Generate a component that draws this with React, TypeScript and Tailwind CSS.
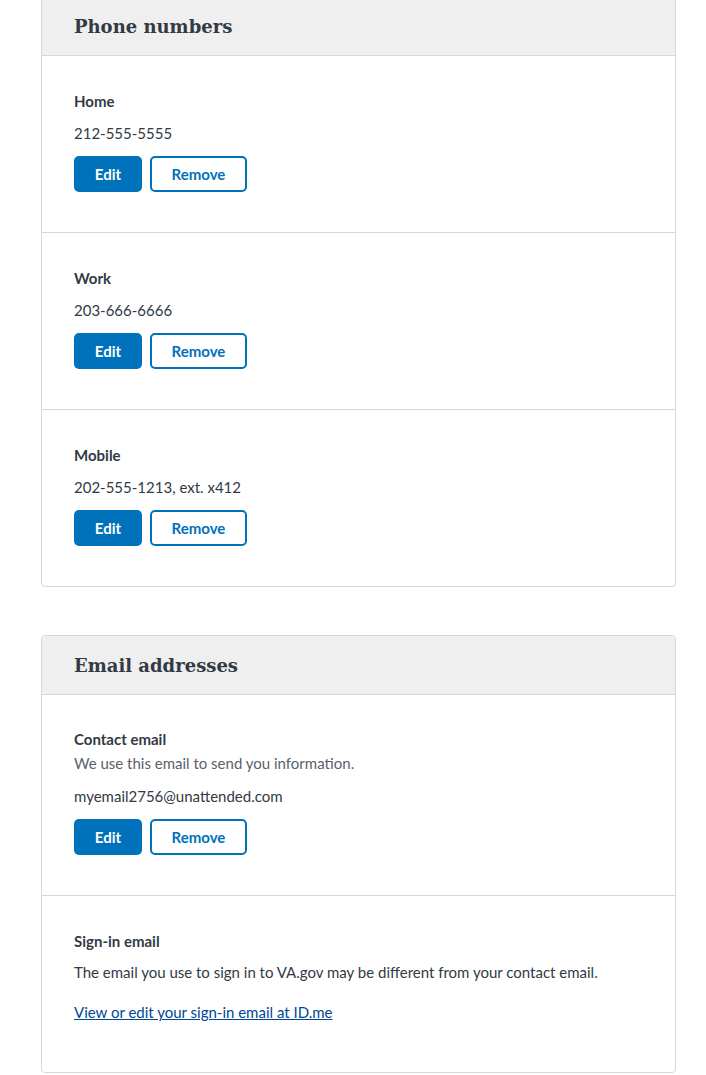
import React from "react";

const sans = "font-['Lato','Liberation_Sans',sans-serif]";
const serif = "font-['DejaVu_Serif','Liberation_Serif',serif]";

function Buttons() {
  return (
    <div className="mt-3 flex gap-2">
      <button className={`h-9 w-[68px] rounded-[5px] bg-[#0071bb] text-[15px] font-bold text-white ${sans}`}>Edit</button>
      <button className={`h-9 w-[97px] rounded-[5px] border-2 border-[#0071bb] bg-white text-[15px] font-bold text-[#0071bb] ${sans}`}>Remove</button>
    </div>
  );
}

function PhoneRow({ label, value, last }: { label: string; value: string; last?: boolean }) {
  return (
    <div className={`px-8 pt-[34px] pb-10 ${last ? "" : "border-b border-[#d6d7d9]"}`}>
      <div className="text-[15px] font-bold leading-[22px] text-[#323a45]">{label}</div>
      <div className="mt-[10px] text-[15px] leading-[22px] text-[#323a45]">{value}</div>
      <Buttons />
    </div>
  );
}

function Header({ title }: { title: string }) {
  return (
    <div className="flex h-[59px] items-center border-b border-[#d6d7d9] bg-[#efefef] px-8">
      <h2 className={`text-[18px] font-bold text-[#323a45] ${serif}`}>{title}</h2>
    </div>
  );
}

export default function App() {
  return (
    <div className={`min-h-[1075px] bg-white ${sans}`}>
      <div className="ml-[41px] w-[635px] -translate-y-1">
        <div className="overflow-hidden rounded-[4px] border border-[#d6d7d9]">
          <Header title="Phone numbers" />
          <PhoneRow label="Home" value="212-555-5555" />
          <PhoneRow label="Work" value="203-666-6666" />
          <PhoneRow label="Mobile" value="202-555-1213, ext. x412" last />
        </div>
        <div className="mt-12 overflow-hidden rounded-[4px] border border-[#d6d7d9]">
          <Header title="Email addresses" />
          <div className="border-b border-[#d6d7d9] px-8 pt-[33px] pb-10">
            <div className="text-[15px] font-bold leading-[22px] text-[#323a45]">Contact email</div>
            <div className="mt-[2px] text-[15px] leading-[22px] text-[#5b616b]">We use this email to send you information.</div>
            <div className="mt-[11px] text-[15px] leading-[22px] text-[#323a45]">myemail2756@unattended.com</div>
            <Buttons />
          </div>
          <div className="px-8 pt-[34px] pb-[49px]">
            <div className="text-[15px] font-bold leading-[22px] text-[#323a45]">Sign-in email</div>
            <p className="mt-[9px] text-[15px] leading-[22px] text-[#323a45]">
              The email you use to sign in to VA.gov may be different from your contact email.
            </p>
            <p className="mt-[18px] text-[15px] leading-[22px]">
              <a href="#" className="text-[#004795] underline">View or edit your sign-in email at ID.me</a>
            </p>
          </div>
        </div>
      </div>
    </div>
  );
}
